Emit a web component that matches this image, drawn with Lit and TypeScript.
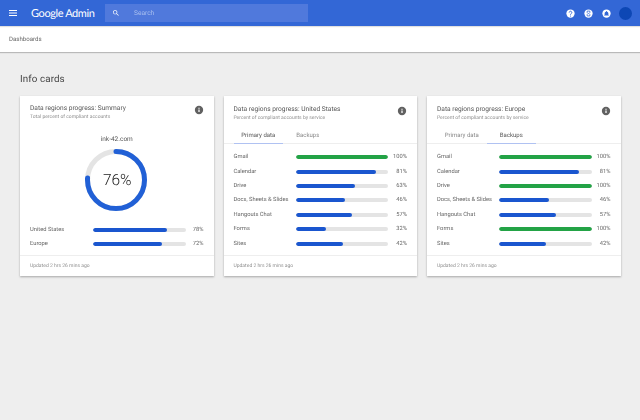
import { LitElement, html, css, svg } from "lit";
import { customElement } from "lit/decorators.js";

type Row = [string, number, number, boolean?];

const infoIcon = html`<svg class="info" viewBox="0 0 24 24"><path fill="#616161" d="M12 2a10 10 0 1 0 0 20 10 10 0 0 0 0-20zm1.500 15h-3v-6.500h3zm0-8h-3V6.500h3z"/></svg>`;

const bar = (w: number, green = false) => html`<div class="track"><div class="fill ${green ? "green" : ""}" style="width:${w}%"></div></div>`;

const row = (r: Row) => html`<div class="row"><span class="name soft">${r[0]}</span>${bar(r[2], r[3])}<span class="pct soft">${r[1]}%</span></div>`;

const us: Row[] = [["Gmail",100,100,true],["Calendar",81,86.500],["Drive",63,64],["Docs, Sheets & Slides",46,54],["Hangouts Chat",57,61.500],["Forms",32,33],["Sites",42,51]];
const eu: Row[] = [["Gmail",100,100,true],["Calendar",81,86.500],["Drive",100,100,true],["Docs, Sheets & Slides",46,54],["Hangouts Chat",57,61.500],["Forms",100,100,true],["Sites",42,51]];

@customElement("app-root")
export class AppRoot extends LitElement {
  static styles = css`
    :host { display:block; width:640px; height:420px; background:#eee; font-family:Roboto,"Liberation Sans",sans-serif; overflow:hidden; color:#424242; text-rendering:geometricPrecision; }
    .soft { filter:blur(.2px); }
    .top { height:26px; background:#3367d6; display:flex; align-items:center; box-shadow:0 1px 1px rgba(0,0,0,.12); position:relative; z-index:2; }
    .menu { width:10px; height:8px; margin-left:8px; fill:#fff; flex:none; }
    .logo { color:#fff; font-family:Lato,Roboto,sans-serif; font-size:11px; letter-spacing:-.4px; margin-left:13px; width:74px; white-space:nowrap; flex:none; }
    .search { margin-left:0; width:203px; height:18px; background:#5079dc; display:flex; align-items:center; box-sizing:border-box; padding-left:7px; flex:none; }
    .search svg { width:8px; height:8px; flex:none; }
    .search span { color:#a9bfef; font-size:6.600px; margin-left:14px; }
    .right { margin-left:auto; display:flex; align-items:center; margin-right:8px; }
    .right svg { width:9px; height:9px; margin-right:9px; }
    .right svg:nth-child(3) { margin-right:8px; }
    .avatar { width:13px; height:13px; border-radius:50%; background:#0d47b5; }
    .sub { height:26px; background:#fff; display:flex; align-items:center; padding:0 0 0 9px; font-size:6.100px; color:#666; box-shadow:0 1px 1px rgba(0,0,0,.22); position:relative; z-index:1; }
    .content { padding:21px 20px 0; }
    h1 { margin:0 0 9px; font-weight:400; font-size:9.800px; line-height:14px; color:#444; letter-spacing:.1px; }
    .cards { display:flex; gap:10px; }
    .card { width:193.500px; height:180px; flex:none; background:#fff; box-shadow:0 1px 2px rgba(0,0,0,.3); display:flex; flex-direction:column; box-sizing:border-box; position:relative; }
    .head { padding:7px 10px 0; height:24px; box-sizing:content-box; display:flex; justify-content:space-between; }
    .head.first { padding-top:6px; height:25px; }
    .title { font-size:6.600px; line-height:9px; margin-top:1.500px; color:#555; white-space:nowrap; }
    .subtitle { font-size:5px; line-height:8px; margin-top:.500px; color:#8f8f8f; white-space:nowrap; }
    .info { width:10px; height:10px; margin:3px 0 0 0; flex:none; }
    .tabs { display:flex; height:17px; border-bottom:1px solid #eee; padding-left:10px; font-size:6px; color:#888; box-sizing:border-box; align-items:flex-start; }
    .tab { width:49.500px; text-align:center; line-height:10px; padding-top:4px; box-sizing:border-box; height:17px; }
    .tab.on { color:#555; border-bottom:1px solid #b0c2f2; }
    .rows { padding:6px 10px 0; display:flex; flex-direction:column; }
    .row { height:14.400px; display:flex; align-items:center; font-size:5.750px; color:#666; }
    .name { width:62px; white-space:nowrap; flex:none; }
    .track { width:92.500px; height:4px; background:#e4e4e4; border-radius:2px; overflow:hidden; flex:none; }
    .fill { height:100%; background:#1a56cf; border-radius:2px; }
    .fill.green { background:#23a346; }
    .pct { margin-left:auto; }
    .foot { position:absolute; left:0; right:0; bottom:0; height:20px; border-top:1px solid #eee; display:flex; align-items:center; padding-left:10px; font-size:5px; color:#8f8f8f; }
    .domain { text-align:center; font-size:6.500px; line-height:9px; color:#555; margin-top:8px; }
    .ring-wrap { position:relative; height:64px; margin-top:4px; }
    .ring-wrap svg { position:absolute; left:64px; top:0; width:64px; height:64px; }
    .big { position:absolute; inset:0; display:flex; align-items:center; justify-content:center; font-size:15.500px; font-weight:300; color:#222; padding-left:1px; }
    .c1rows { padding:10.500px 10px 0; }
    .c1rows .name { width:63px; }
  `;

  render() {
    const r = 28.500, C = 2 * Math.PI * r;
    return html`
      <div class="top">
        <svg class="menu" viewBox="0 0 10 8"><path d="M1 1h8v1H1zM1 3.500h8v1H1zM1 6h8v1H1z"/></svg>
        <div class="logo">Google Admin</div>
        <div class="search">
          <svg viewBox="0 0 24 24"><path fill="#fff" d="M15.500 14h-.79l-.28-.27C15.410 12.590 16 11.110 16 9.500 16 5.910 13.090 3 9.500 3S3 5.910 3 9.500 5.910 16 9.500 16c1.610 0 3.090-.59 4.230-1.570l.27.28v.79l5 4.990L20.490 19l-4.990-5zm-6 0C7.010 14 5 11.990 5 9.500S7.010 5 9.500 5 14 7.010 14 9.500 11.990 14 9.500 14z"/></svg>
          <span class="soft">Search</span>
        </div>
        <div class="right">
          <svg viewBox="0 0 24 24"><circle cx="12" cy="12" r="11" fill="#fff"/><path fill="none" stroke="#3367d6" stroke-width="2.500" d="M8.500 9.500a3.500 3.500 0 1 1 5.500 2.800c-1.300.9-2 1.500-2 3"/><circle cx="12" cy="18.500" r="1.500" fill="#3367d6"/></svg>
          <svg viewBox="0 0 24 24"><circle cx="12" cy="12" r="11" fill="#fff"/><path fill="none" stroke="#3367d6" stroke-width="2" d="M8.500 5.500h7v4l-2.500 2.500 2.500 2.500v4h-7v-4L11 12 8.500 9.500z"/></svg>
          <svg viewBox="0 0 24 24"><circle cx="12" cy="12" r="11" fill="#fff"/><path fill="#3367d6" d="M12 5.500a1.500 1.500 0 0 1 1.500 1.500c2.500.7 3.500 2.800 3.500 5v3l1.500 1.500v1h-13v-1L7 15v-3c0-2.200 1-4.300 3.500-5A1.500 1.500 0 0 1 12 5.500z"/></svg>
          <div class="avatar"></div>
        </div>
      </div>
      <div class="sub"><span class="soft">Dashboards</span></div>
      <div class="content">
        <h1><span class="soft">Info cards</span></h1>
        <div class="cards">
          <div class="card">
            <div class="head first"><div class="soft"><div class="title">Data regions progress: Summary</div><div class="subtitle">Total percent of compliant accounts</div></div>${infoIcon}</div>
            <div class="domain soft">ink-42.com</div>
            <div class="ring-wrap">
              <svg viewBox="0 0 64 64">
                <circle cx="32" cy="32" r="${r}" fill="none" stroke="#e4e4e4" stroke-width="5"/>
                ${svg`<circle cx="32" cy="32" r="${r}" fill="none" stroke="#2160d6" stroke-width="5" stroke-linecap="round" stroke-dasharray="${C * 0.76} ${C}" transform="rotate(-90 32 32)"/>`}
              </svg>
              <div class="big soft">76%</div>
            </div>
            <div class="rows c1rows">
              ${row(["United States",78,80])}
              ${row(["Europe",72,74.500])}
            </div>
            <div class="foot"><span class="soft">Updated 2 hrs 26 mins ago</span></div>
          </div>
          ${this.svcCard("United States", us, 0)}
          ${this.svcCard("Europe", eu, 1)}
        </div>
      </div>`;
  }

  svcCard(name: string, rows: Row[], active: number) {
    return html`<div class="card">
      <div class="head"><div class="soft"><div class="title">Data regions progress: ${name}</div><div class="subtitle">Percent of compliant accounts by service</div></div>${infoIcon}</div>
      <div class="tabs"><div class="tab ${active === 0 ? "on" : ""}"><span class="soft">Primary data</span></div><div class="tab ${active === 1 ? "on" : ""}"><span class="soft">Backups</span></div></div>
      <div class="rows">${rows.map(row)}</div>
      <div class="foot"><span class="soft">Updated 2 hrs 26 mins ago</span></div>
    </div>`;
  }
}
